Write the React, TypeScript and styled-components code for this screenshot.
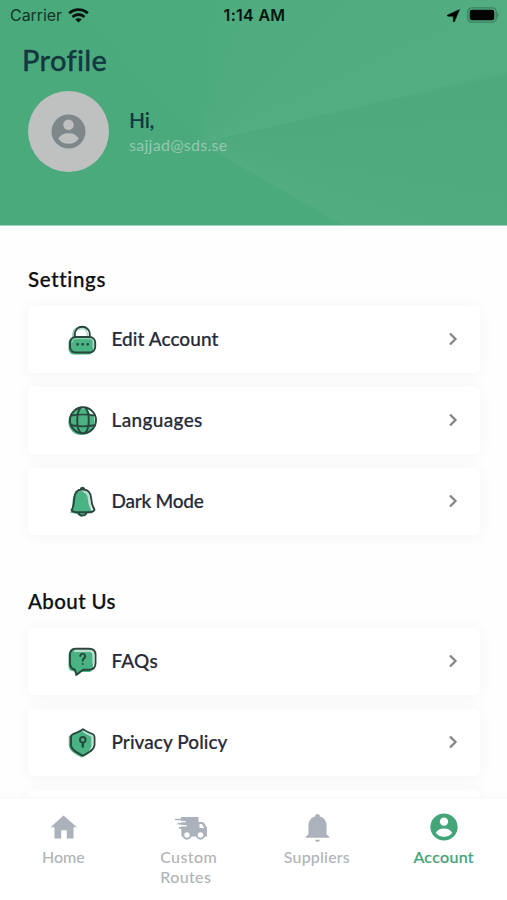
import React from "react";
import styled, { createGlobalStyle } from "styled-components";

const GlobalStyle = createGlobalStyle`
  * { box-sizing: border-box; }
  body { margin: 0; background: #fefefe; overflow: hidden; }
`;

const GREEN = "#43a578";
const INK = "#272a36";

const Screen = styled.main`
  width: 507px;
  height: 900px;
  display: flex;
  flex-direction: column;
  overflow: hidden;
  background: #fefefe;
  font-family: Lato, "Open Sans", sans-serif;
  font-variant-ligatures: none;
`;

const Header = styled.header`
  height: 226px;
  flex: none;
  background:
    linear-gradient(to bottom, transparent 225px, #a3d2bb 225px),
    conic-gradient(from 0deg at 200px 143px, #4cab7d 0deg, #53ae81 76.6deg, #4daa7d 77.8deg, #52ad80 119.2deg, #4aaa7c 120.6deg, #4aaa7c 285deg, #4cab7d 360deg);
`;

const StatusBar = styled.div`
  height: 30px;
  display: grid;
  grid-template-columns: 1fr auto 1fr;
  align-items: center;
  padding: 0 8px 0 10px;
  font-family: Inter, sans-serif;
  font-size: 16px;
  color: #07140e;
`;

const Carrier = styled.div`
  display: flex;
  align-items: center;
  gap: 6px;
  letter-spacing: -0.05px;
  color: #123725;
`;

const Clock = styled.time`
  font-weight: 600;
  letter-spacing: 0.3px;
`;

const StatusIcons = styled.div`
  display: flex;
  justify-content: flex-end;
  align-items: center;
  gap: 7px;
`;

const Title = styled.h1`
  margin: 12px 0 0 22px;
  font-size: 29px;
  line-height: 36px;
  font-weight: 500;
  letter-spacing: 0.3px;
  -webkit-text-stroke: 0.3px #143840;
  color: #143840;
`;

const Person = styled.section`
  display: flex;
  align-items: center;
  gap: 20px;
  margin: 13px 0 0 28px;
`;

const Avatar = styled.div`
  width: 81px;
  height: 81px;
  border-radius: 50%;
  background: #bfc0c0;
  display: grid;
  place-items: center;
`;

const Greeting = styled.div`
  font-size: 21px;
  line-height: 27px;
  font-weight: 600;
  letter-spacing: -0.3px;
  color: #143840;
`;

const Email = styled.div`
  font-size: 16px;
  line-height: 24px;
  letter-spacing: 0.28px;
  color: #96c7b0;
`;

const Content = styled.div`
  height: 571px;
  flex: none;
  padding: 40px 27px 0 28px;
  overflow: hidden;
`;

const Group = styled.section`
  & + & { margin-top: 53px; }
`;

const GroupTitle = styled.h2<{ $tracking: number }>`
  margin: 0;
  height: 40px;
  font-size: 20.5px;
  line-height: 26px;
  font-weight: 500;
  letter-spacing: ${(p) => p.$tracking}px;
  -webkit-text-stroke: 0.25px #0d0f12;
  color: #0d0f12;
`;

const CardList = styled.div`
  display: flex;
  flex-direction: column;
  gap: 14px;
`;

const Card = styled.div`
  height: 67px;
  flex: none;
  display: flex;
  align-items: center;
  padding: 0 20px 2px 39px;
  border-radius: 5px;
  background: #fff;
  box-shadow: 0 1px 16px 1px rgba(0, 0, 0, 0.038);
`;

const CardLabel = styled.span<{ $tracking: number }>`
  flex: 1;
  margin-left: 12.5px;
  font-size: 19px;
  font-weight: 500;
  letter-spacing: ${(p) => p.$tracking}px;
  -webkit-text-stroke: 0.2px ${INK};
  color: ${INK};
`;

const TabBar = styled.nav`
  height: 103px;
  flex: none;
  display: grid;
  grid-template-columns: repeat(4, 1fr);
  background: #fff;
  border-top: 1px solid #f7f7f7;
`;

const Tab = styled.div<{ $active?: boolean }>`
  display: flex;
  flex-direction: column;
  align-items: center;
  padding-top: 13px;
  color: ${(p) => (p.$active ? GREEN : "#b0b4b8")};
`;

const TabLabel = styled.span<{ $tracking: number; $active?: boolean; $wide?: boolean }>`
  margin-top: 4px;
  margin-right: ${(p) => (p.$wide ? 3 : 0)}px;
  font-size: 16px;
  line-height: 20px;
  font-weight: 500;
  letter-spacing: ${(p) => p.$tracking}px;
  -webkit-text-stroke: ${(p) => (p.$active ? 0.2 : 0)}px currentColor;
  white-space: pre-line;
`;

const PersonGlyph = ({ size, color, cut }: { size: number; color: string; cut: string }) => (
  <svg width={size} height={size} viewBox="0 0 28 28">
    <circle cx="14" cy="14" r="13.6" fill={color} />
    <circle cx="14" cy="8.6" r="4.2" fill={cut} />
    <path d="M5.8 19.7c1.6-2.9 4.5-4.3 8.2-4.3s6.6 1.4 8.2 4.3c-1.8 2.5-4.7 4-8.2 4s-6.4-1.5-8.2-4z" fill={cut} />
  </svg>
);

const Wifi = () => (
  <svg width="21" height="15" viewBox="0 0 21 15" fill="none" stroke="#07140e" strokeWidth="2.8">
    <path d="M1.2 5.3C6.4.3 14.6.3 19.8 5.3" />
    <path d="M4.5 8.9c3.4-3.2 8.6-3.2 12 0" />
    <path d="M10.5 14.5 7.2 11.5c1.8-1.7 4.8-1.7 6.6 0z" fill="#07140e" stroke="none" />
  </svg>
);

const Location = () => (
  <svg width="13" height="13" viewBox="0 0 13 13">
    <path d="M12.5.5 7.6 12.3c-.3.9-1.3.8-1.3-.1V7.2H1c-1 0-1-1-.2-1.3z" fill="#020403" stroke="#020403" strokeWidth=".5" />
  </svg>
);

const Battery = () => (
  <svg width="32" height="16" viewBox="0 0 32 16">
    <rect x=".8" y=".8" width="28.4" height="14.4" rx="4" fill="none" stroke="#388160" strokeWidth="1.3" />
    <rect x="2.7" y="2.7" width="24.6" height="10.6" rx="2.3" fill="#020403" />
    <path d="M30.5 5.5c1.7.8 1.7 4.2 0 5z" fill="#388160" />
  </svg>
);

const Duotone = ({ children }: { children: React.ReactNode }) => (
  <svg width="32" height="32" viewBox="0 0 32 32" fill="none" stroke="#29473d" strokeWidth="1.9" strokeLinejoin="round" strokeLinecap="round">
    {children}
  </svg>
);

const LockIcon = () => (
  <Duotone>
    <path d="M6 15V11a8 8 0 0 1 14-4.5" stroke="#8acaae" strokeWidth="1.5" />
    <rect x="1.5" y="14.5" width="25" height="17" rx="5.5" fill="#49b384" stroke="none" />
    <path d="M7.8 14v-2.800a7.500 7.500 0 0 1 15 0V14" />
    <path d="M12.500 6.500c4-2 7 0 7.700 4v3" stroke="#9ed8bf" strokeWidth="1.300" />
    <rect x="3" y="14" width="25.2" height="15.5" rx="5.500" />
    <path d="M5 19.5c0-3 1.500-3.800 4-3.800h14c2 0 3 1 3 3v6" stroke="#9ed8bf" strokeWidth="1" />
    <path d="M10.5 21.3h.1M15.600 21.300h.1M20.700 21.300h.1" strokeWidth="2.700" />
  </Duotone>
);

const GlobeIcon = () => (
  <Duotone>
    <circle cx="14.500" cy="17.800" r="13.200" fill="#49b384" stroke="none" />
    <path d="M18 4c5 0 8.500 4 9.500 8l-4-1.500c-1-2.500-3-4.500-5.500-6.500z" fill="#e5f3ed" stroke="none" />
    <circle cx="16" cy="16.300" r="13" />
    <path d="M14 3.500c-5 4-5 21.500 0 25.500M18 3.500c5 4 5 21.500 0 25.500M4.500 11.500c6-1.200 17-1.200 23 0M4.500 21.300c6 1.200 17 1.200 23 0" />
  </Duotone>
);

const BellIcon = () => (
  <Duotone>
    <path d="M3 27.500c3-3 2-7 2.500-11C6 10 9 6 14 6c6 0 9 4 9 11 .5 5 0 8 3 10l-8 2-4 3-4-3z" fill="#49b384" stroke="none" />
    <path d="M15.500 4.500c5.500 0 8.300 3.500 8.700 9 .3 6 1.200 8 3.300 11-1 2.300-3 2.800-6 2.800h-11c-3 0-5-.5-6-2.300 2.300-3 2.500-6 2.700-11.500.3-5.500 3.300-9 8.300-9zM13.500 4.500c.3-2.300 3.700-2.300 4 0M11.500 28c1.500 3.500 6.500 3.500 8 0" />
    <path d="M17.500 6.800c3.500 1 4.300 4 4.500 7.700.2 3.500.5 4.500 1.500 7" stroke="#b8dfce" strokeWidth="2.200" />
  </Duotone>
);

const QuestionIcon = () => (
  <Duotone>
    <path d="M1.500 11c0-4 1.500-6 5-6H22c3 0 4 2 4 5v11c0 4-1.500 6-5 6h-6.500l-6 4.500-1-5c-4.500-.5-6-2-6-6z" fill="#49b384" stroke="none" />
    <path d="M8.500 3.800h13.500c4.500 0 6.500 2 6.500 6V18c0 4.500-2 6.700-6.500 6.700h-6l-6.500 5-1.500-5C4.500 24 3 22.500 3 18V9.800c0-4 1.500-6 5.500-6z" />
    <path d="M8 6h13.500c3.500 0 4.800 1 4.800 4.500V18" stroke="#b8dfce" />
    <path d="M13.200 11c.3-3 5.300-2.700 5 .5-.3 1.800-2.500 2-2.500 4.200M15.700 19v.1" strokeWidth="1.900" />
  </Duotone>
);

const ShieldIcon = () => (
  <Duotone>
    <path d="M14 4.500 25 9V18c0 6-6 9.500-10.500 13.500C9 28.500 1.800 25 1.800 19V10z" fill="#49b384" stroke="none" />
    <path d="M16 3.200c2.200 1.700 5.800 3.600 9.500 5 1.500.6 2 1.500 2 3V19c0 5-6.800 8-11.500 10.800C11 27 4 24.500 4 19v-7.800c0-1.700.7-2.500 2-3 3.500-1.300 7-3 10-5z" />
    <path d="M17.500 6c3 2 5 3 7.700 4v9" stroke="#b8dfce" />
    <circle cx="15.800" cy="13.800" r="2.800" />
    <path d="M15.800 17v3.800" strokeWidth="2.300" />
  </Duotone>
);

const Chevron = () => (
  <svg width="14" height="16" viewBox="0 0 14 16" fill="none" stroke="#858585" strokeWidth="2.3">
    <path d="m4 2.500 5.500 5.500L4 13.500" />
  </svg>
);

const HomeGlyph = () => (
  <svg width="30" height="32" viewBox="0 0 30 32">
    <path d="M15.500 4.500 29 16.300h-3.500V27.500h-6.700v-8.300h-5.600v8.300H6.500V16.300H2.500z" fill="#abb2bb" />
  </svg>
);

const TruckGlyph = () => (
  <svg width="34" height="32" viewBox="0 0 34 32">
    <path d="M8 6h17.500v5h3.500c1 0 1.600.3 2.200 1.200l2.800 4.300v9H8.500z" fill="#abb2bb" />
    <path d="M26.500 13v4h4.800l-2.500-4z" fill="#fff" />
    <path d="M2 8.500h10M4.500 12.700h9M6 16.800h7" stroke="#abb2bb" strokeWidth="1.700" />
    <path d="M4 10.600h8.500M6 14.800h7.500" stroke="#fff" strokeWidth="1.400" />
    <g fill="#fff" stroke="#abb2bb" strokeWidth="2">
      <circle cx="14" cy="24" r="3.700" /><circle cx="27.500" cy="24" r="3.700" />
    </g>
  </svg>
);

const BellGlyph = () => (
  <svg width="28" height="32" viewBox="0 0 28 32">
    <path d="M14.500 3c1.500 0 2.400 1.100 2.400 2.400 4.500 1.300 6.700 4.700 6.700 9.300v8.800l2.600 2v1.300H2.800v-1.300l2.600-2v-8.800c0-4.600 2.200-8 6.700-9.300C12.100 4.100 13 3 14.500 3zM12 28.800h5c-.8 2.700-4.200 2.700-5 0z" fill="#abb2bb" />
  </svg>
);

const AccountGlyph = styled.div`
  height: 32px;
  display: grid;
  place-items: center;
`;

const settings = [
  { label: "Edit Account", icon: <LockIcon />, tracking: 0.05 },
  { label: "Languages", icon: <GlobeIcon />, tracking: 0.35 },
  { label: "Dark Mode", icon: <BellIcon />, tracking: -0.25 },
];

const about = [
  { label: "FAQs", icon: <QuestionIcon />, tracking: 0.2 },
  { label: "Privacy Policy", icon: <ShieldIcon />, tracking: 0.05 },
];

const Row = ({ label, icon, tracking }: (typeof settings)[number]) => (
  <Card>
    {icon}
    <CardLabel $tracking={tracking}>{label}</CardLabel>
    <Chevron />
  </Card>
);

export default function App() {
  return (
    <Screen>
      <GlobalStyle />
      <Header>
        <StatusBar>
          <Carrier>Carrier <Wifi /></Carrier>
          <Clock>1:14 AM</Clock>
          <StatusIcons><Location /><Battery /></StatusIcons>
        </StatusBar>
        <Title>Profile</Title>
        <Person>
          <Avatar><PersonGlyph size={35} color="#7e878a" cut="#bfc0c0" /></Avatar>
          <div>
            <Greeting>Hi,</Greeting>
            <Email>sajjad@sds.se</Email>
          </div>
        </Person>
      </Header>
      <Content>
        <Group>
          <GroupTitle $tracking={0.65}>Settings</GroupTitle>
          <CardList>{settings.map((s) => <Row key={s.label} {...s} />)}</CardList>
        </Group>
        <Group>
          <GroupTitle $tracking={0.4}>About Us</GroupTitle>
          <CardList>
            {about.map((s) => <Row key={s.label} {...s} />)}
            <Card />
          </CardList>
        </Group>
      </Content>
      <TabBar>
        <Tab><HomeGlyph /><TabLabel $tracking={0}>Home</TabLabel></Tab>
        <Tab><TruckGlyph /><TabLabel $tracking={0.4} $wide>{"Custom\nRoutes"}</TabLabel></Tab>
        <Tab><BellGlyph /><TabLabel $tracking={0.2}>Suppliers</TabLabel></Tab>
        <Tab $active>
          <AccountGlyph><PersonGlyph size={28} color={GREEN} cut="#fff" /></AccountGlyph>
          <TabLabel $tracking={0.3} $active>Account</TabLabel>
        </Tab>
      </TabBar>
    </Screen>
  );
}
